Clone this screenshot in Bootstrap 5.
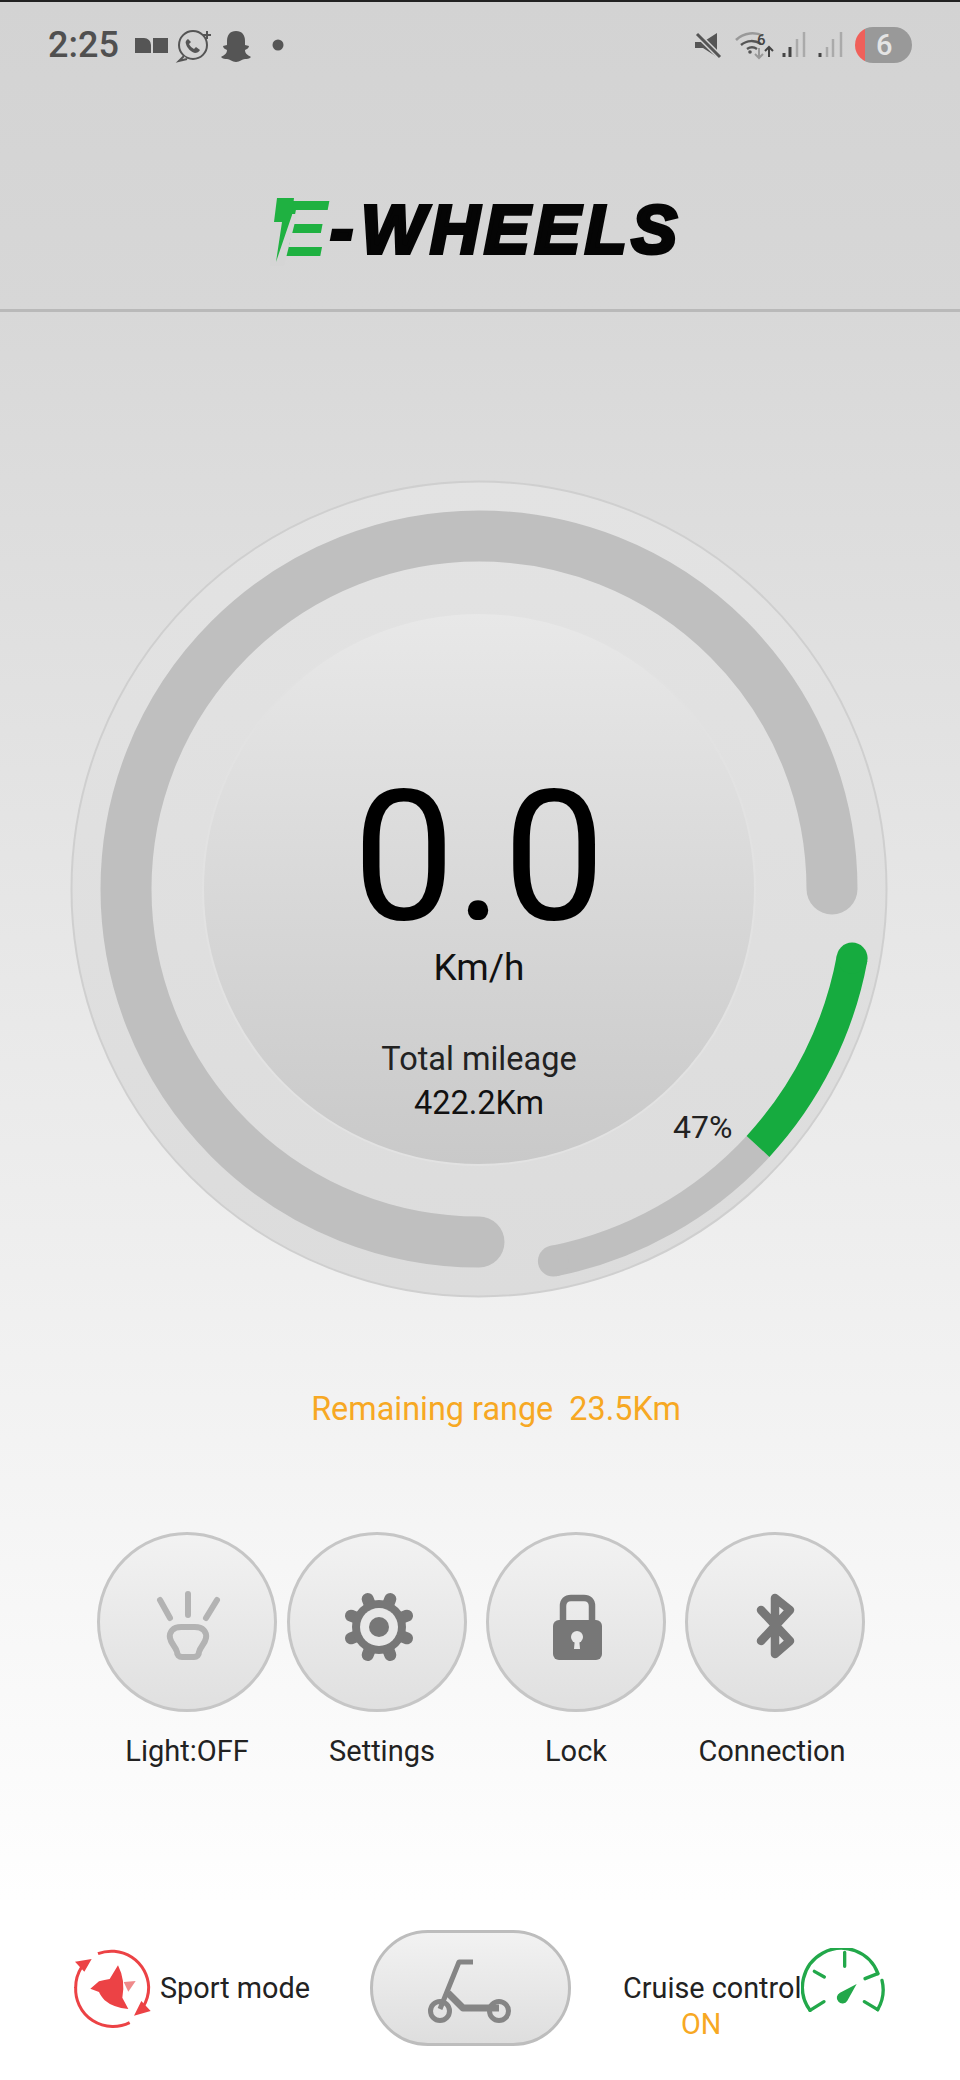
<!DOCTYPE html>
<html lang="en">
<head>
    <meta charset="UTF-8">
    <meta name="viewport" content="width=device-width, initial-scale=1.0">
    <title>E-Wheels</title>
    <link href="https://cdn.jsdelivr.net/npm/bootstrap@5.3.0/dist/css/bootstrap.min.css" rel="stylesheet">
    <style>
        body {
            margin: 0;
            background: #fff;
            font-family: Roboto, "Liberation Sans", sans-serif;
        }
        .app-shell {
            width: 960px;
            height: 2080px;
            overflow: hidden;
        }
        .top-head {
            height: 312px;
            background: linear-gradient(#d3d3d3, #d7d7d7);
            border-top: 2px solid #222;
            border-bottom: 3px solid #b9b9b9;
        }
        .status-row {
            height: 36px;
            margin-top: 25px;
            padding: 0 48px;
        }
        .status-time {
            font-size: 36px;
            font-weight: 500;
            color: #505050;
            line-height: 36px;
            width: 86px;
        }
        .logo-row {
            margin-top: 131px;
            margin-left: 274px;
            height: 70px;
        }
        .logo-e {
            font: italic 700 80px/70px "Liberation Sans", sans-serif;
            color: #1fb141;
        }
        .logo-bolt {
            position: absolute;
            left: 0;
            top: 0;
            overflow: visible;
        }
        .logo-dash {
            font: italic 700 68px/70px "Liberation Sans", sans-serif;
            color: #050505;
            -webkit-text-stroke: 4px #050505;
            margin: 0 8px 0 3px;
        }
        .logo-word {
            font: italic 700 68px/70px "Liberation Sans", sans-serif;
            color: #050505;
            -webkit-text-stroke: 4px #050505;
            letter-spacing: 5px;
        }
        .batt-pill {
            width: 57px;
            height: 36px;
            background: linear-gradient(90deg, #f0605a 10px, #999 10px);
            color: #e4e4e4;
            font-size: 29px;
            font-weight: 500;
            line-height: 36px;
            padding-left: 21px;
        }
        .dash-area {
            background: linear-gradient(#d8d8d8, #fefefe);
        }
        .dial {
            display: grid;
            width: 818px;
            height: 818px;
            margin: 168px 0 0 70px;
        }
        .dial > * {
            grid-area: 1 / 1;
        }
        .dial-text {
            padding-top: 297px;
            color: #111;
        }
        .speed-num {
            font-size: 182px;
            line-height: 160px;
            color: #000;
        }
        .speed-unit {
            font-size: 37px;
            line-height: 44px;
            margin-top: 9px;
        }
        .mile-head {
            font-size: 32.500px;
            line-height: 44px;
            margin-top: 47px;
            color: #222;
        }
        .mile-val {
            font-size: 32.500px;
            line-height: 44px;
        }
        .batt-pct {
            position: absolute;
            left: 603px;
            top: 629px;
            font-size: 32px;
            line-height: 36px;
            color: #222;
        }
        .range-line {
            margin-top: 90px;
            padding-left: 32px;
            font-size: 32.400px;
            line-height: 42px;
            color: #f7a823;
        }
        .ctrl-row {
            margin: 102px 0 0 97px;
            gap: 19px;
        }
        .ctrl-first {
            margin-right: -9px;
        }
        .ctrl-col {
            width: 180px;
        }
        .round-btn {
            width: 180px;
            height: 180px;
            padding: 0;
            background: linear-gradient(#f2f2f2, #e0e0e0);
            border: 3px solid #c6c6c6;
        }
        .round-btn svg {
            display: block;
        }
        .ctrl-label {
            margin-top: 21px;
            font-size: 29px;
            line-height: 36px;
            color: #222;
            white-space: nowrap;
        }
        .nudge-right {
            padding-left: 10px;
        }
        .nudge-left {
            padding-right: 6px;
        }
        .bottom-bar {
            height: 180px;
            background: #fff;
            flex-shrink: 0;
        }
        .sport-zone {
            width: 370px;
            padding: 47px 0 0 73px;
        }
        .zone-text {
            font-size: 28.800px;
            line-height: 36px;
            color: #222;
            white-space: nowrap;
        }
        .sport-text {
            padding: 23px 0 0 2px;
        }
        .scooter-btn {
            width: 201px;
            height: 116px;
            margin-top: 30px;
            padding: 0;
            background: linear-gradient(#f2f2f2, #dedede);
            border: 3px solid #bdbdbd;
            border-radius: 58px;
        }
        .cruise-zone {
            padding: 48px 0 0 52px;
        }
        .cruise-text {
            padding-top: 22px;
        }
        .cruise-on {
            color: #f7a823;
            padding-right: 22px;
        }
    </style>
</head>
<body>
    <div class="app-shell d-flex flex-column">
        <header class="top-head">
            <div class="status-row d-flex align-items-center justify-content-between">
                <div class="d-flex align-items-center">
                    <span class="status-time">2:25</span>
                    <svg width="170" height="36" viewBox="134 27 170 36">
                        <path d="M135 38h9a7 7 0 0 1 7 7v8h-16zM153 38h15v15h-15z" fill="#555"/>
                        <circle cx="193" cy="45" r="14" fill="none" stroke="#555" stroke-width="2"/>
                        <path d="M184 56l-5 5 8-2" fill="#d3d3d3" stroke="#555" stroke-width="2"/>
                        <path d="M188 39c-2 1-3 3-2 5 1 4 5 8 9 9 2 0 4-1 5-3l-4-3-2 2c-2-1-4-3-5-5l2-2z" fill="#555"/>
                        <path d="M203 35h8M207 31v8" stroke="#555" stroke-width="2"/>
                        <path d="M236 31c6 0 9 4 9 10v4l4 1c0 2-2 3-4 4 0 4 3 5 6 7-2 2-4 2-6 2-3 0-5 3-9 3s-6-3-9-3c-2 0-4 0-6-2 3-2 6-3 6-7-2-1-4-2-4-4l4-1v-4c0-6 3-10 9-10z" fill="#555"/>
                        <circle cx="278" cy="45" r="5.5" fill="#555"/>
                    </svg>
                </div>
                <div class="d-flex align-items-center">
                    <svg width="155" height="36" viewBox="692 27 155 36">
                        <path d="M695 42h8l14-9v24l-14-9h-8z" fill="#555"/>
                        <path d="M697 34l23 23" stroke="#d3d3d3" stroke-width="6"/>
                        <path d="M697 34l23 23" stroke="#555" stroke-width="3"/>
                        <path d="M736 40c8-8 20-8 27-4" fill="none" stroke="#999" stroke-width="2.5"/>
                        <path d="M741 45c6-5 14-5 20-1" fill="none" stroke="#555" stroke-width="2.5"/>
                        <path d="M747 49c3-2 7-2 10 0" fill="none" stroke="#555" stroke-width="2.5"/>
                        <circle cx="750" cy="52" r="1.8" fill="#555"/>
                        <text x="757" y="45" font-family="Roboto, sans-serif" font-size="15" font-weight="500" fill="#444">6</text>
                        <path d="M769 57V47M765 51l4-4 4 4" fill="none" stroke="#444" stroke-width="2"/>
                        <path d="M759 48v10M755 54l4 4 4-4" fill="none" stroke="#999" stroke-width="2"/>
                        <path d="M784 57v-4M790 57v-10" stroke="#444" stroke-width="3"/>
                        <path d="M797 57v-18M804 57v-25" stroke="#aaa" stroke-width="2.5"/>
                        <path d="M820 57v-4" stroke="#444" stroke-width="3"/>
                        <path d="M827 57v-10M833 57v-18M841 57v-25" stroke="#aaa" stroke-width="2.5"/>
                    </svg>
                    <span class="batt-pill rounded-pill ms-2">6</span>
                </div>
            </div>
            <div class="logo-row position-relative d-flex align-items-center">
                <span class="logo-e">E</span><span class="logo-dash">-</span><span class="logo-word">WHEELS</span>
                <svg class="logo-bolt" width="60" height="70" viewBox="0 0 60 70">
                    <path d="M-4 20H23L10 72H-4z" fill="#d5d5d5"/>
                    <path d="M3 4H20L18 21 2 68 8 28H0z" fill="#1fb141"/>
                </svg>
            </div>
        </header>

        <main class="dash-area flex-grow-1">
            <div class="dial position-relative">
                <svg width="818" height="818" viewBox="-1 -1 818 818">
                    <defs>
                        <linearGradient id="ringFill" x1="0" y1="0" x2="0" y2="1">
                            <stop offset="0" stop-color="#e3e3e3"/>
                            <stop offset="1" stop-color="#dcdcdc"/>
                        </linearGradient>
                        <linearGradient id="coreFill" x1="0" y1="0" x2="0" y2="1">
                            <stop offset="0" stop-color="#e8e8e8"/>
                            <stop offset="1" stop-color="#c9c9c9"/>
                        </linearGradient>
                    </defs>
                    <circle cx="408" cy="408" r="407.500" fill="url(#ringFill)" stroke="#cfcfcf" stroke-width="2"/>
                    <path d="M408 761A353 353 0 1 1 761 408" fill="none" stroke="#bfbfbf" stroke-width="51" stroke-linecap="round"/>
                    <circle cx="408" cy="408" r="276" fill="url(#coreFill)" stroke="#e2e2e2" stroke-width="2"/>
                    <path d="M482.4 780.1A379.5 379.5 0 0 0 687 665.4" fill="none" stroke="#bfbfbf" stroke-width="31"/>
                    <circle cx="482.4" cy="780.1" r="15.5" fill="#bfbfbf"/>
                    <path d="M687 665.4A379.5 379.5 0 0 0 781.1 477.1" fill="none" stroke="#16ab3f" stroke-width="31"/>
                    <circle cx="781.1" cy="477.1" r="15.5" fill="#16ab3f"/>
                </svg>
                <div class="dial-text d-flex flex-column align-items-center">
                    <div class="speed-num">0.0</div>
                    <div class="speed-unit">Km/h</div>
                    <div class="mile-head">Total mileage</div>
                    <div class="mile-val">422.2Km</div>
                </div>
                <span class="batt-pct">47%</span>
            </div>

            <div class="range-line text-center">Remaining range&nbsp;&nbsp;23.5Km</div>

            <div class="ctrl-row d-flex">
                <div class="ctrl-col ctrl-first text-center">
                    <button class="btn rounded-circle round-btn" type="button">
                        <svg width="174" height="174" viewBox="100 1535 174 174">
                            <path d="M188 1594v21M160 1600l10 18M217 1600l-11 18" stroke="#b3b3b3" stroke-width="6" stroke-linecap="round" fill="none"/>
                            <path d="M181 1627h14c8 0 12 5 11 11-1 6-6 9-7 14 0 3-2 5-5 5h-12c-3 0-5-2-5-5-1-5-6-8-7-14-1-6 3-11 11-11z" fill="none" stroke="#b3b3b3" stroke-width="6"/>
                        </svg>
                    </button>
                    <div class="ctrl-label">Light:OFF</div>
                </div>
                <div class="ctrl-col text-center">
                    <button class="btn rounded-circle round-btn" type="button">
                        <svg width="174" height="174" viewBox="290 1535 174 174">
                            <path d="M370 1605l-2.300-6M388 1605l2.300-6M370 1649l-2.300 6M388 1649l2.300 6M357 1618l-6-2.300M401 1618l6-2.300M357 1636l-6 2.300M401 1636l6 2.300" stroke="#777" stroke-width="12" stroke-linecap="round"/>
                            <circle cx="379" cy="1627" r="27" fill="#777"/>
                            <circle cx="379" cy="1627" r="19" fill="#e8e8e8"/>
                            <circle cx="379" cy="1627" r="10" fill="#777"/>
                        </svg>
                    </button>
                    <div class="ctrl-label nudge-right">Settings</div>
                </div>
                <div class="ctrl-col text-center">
                    <button class="btn rounded-circle round-btn" type="button">
                        <svg width="174" height="174" viewBox="489 1535 174 174">
                            <path d="M563 1622v-16c0-5 3-8 8-8h13c5 0 8 3 8 8v16" fill="none" stroke="#777" stroke-width="6.500"/>
                            <rect x="553" y="1620" width="49" height="40" rx="6" fill="#777"/>
                            <circle cx="577" cy="1637" r="6" fill="#e8e8e8"/>
                            <path d="M575 1638h4l1 11h-6z" fill="#e8e8e8"/>
                        </svg>
                    </button>
                    <div class="ctrl-label">Lock</div>
                </div>
                <div class="ctrl-col text-center">
                    <button class="btn rounded-circle round-btn" type="button">
                        <svg width="174" height="174" viewBox="688 1535 174 174">
                            <path d="M761 1610l29 31-15 13v-56l15 12-29 31" fill="none" stroke="#777" stroke-width="8.500" stroke-linecap="round" stroke-linejoin="round"/>
                        </svg>
                    </button>
                    <div class="ctrl-label nudge-left">Connection</div>
                </div>
            </div>
        </main>

        <footer class="bottom-bar d-flex">
            <div class="sport-zone d-flex">
                <svg width="85" height="84" viewBox="70 140 255 252">
                    <g fill="none" stroke="#ec4245" stroke-width="9">
                        <path d="M145 160a112 112 0 0 1 152 100 112 112 0 0 1-17 60"/>
                        <path d="M240 367a112 112 0 0 1-162-105 112 112 0 0 1 18-62"/>
                    </g>
                    <path d="M76 184l50-8-22 38zM303 332l-50 14 22-44z" fill="#ec4245"/>
                    <path d="M122 265L148 243Q165 238 180 236L205 195Q228 240 218 292L236 326Q190 322 165 300Q152 285 148 275Z" fill="#ec4245"/>
                    <path d="M222 245l36-3-22 32z" fill="#ef8a8b"/>
                </svg>
                <div class="zone-text sport-text">Sport mode</div>
            </div>
            <button class="btn scooter-btn flex-shrink-0" type="button">
                <svg width="90" height="75" viewBox="425 1945 90 75">
                    <g fill="none" stroke="#858585" stroke-width="5">
                        <circle cx="439" cy="2005" r="9.500"/>
                        <circle cx="498" cy="2005" r="9.500"/>
                        <path d="M472 1956h-14l-19 47" stroke-linejoin="round"/>
                        <path d="M447 1987l15 15h36" stroke-width="7" stroke-linejoin="round"/>
                    </g>
                </svg>
            </button>
            <div class="cruise-zone d-flex">
                <div class="zone-text cruise-text text-center">
                    <div>Cruise control</div>
                    <div class="cruise-on">ON</div>
                </div>
                <svg width="85" height="68" viewBox="905 145 255 204">
                    <g fill="none" stroke="#22a84a" stroke-width="10" stroke-linecap="round">
                        <path d="M932 332A117 117 0 1 1 1136 222"/>
                        <path d="M1148 242A118 118 0 0 1 1135 330"/>
                        <path d="M1036 158v42M945 215l30 17M1135 222l-38 15M932 332l42-26M1135 330l-40-24"/>
                    </g>
                    <path d="M1072 253l-28 50a17 17 0 1 1-22-24z" fill="#22a84a"/>
                </svg>
            </div>
        </footer>
    </div>
    <script src="https://cdn.jsdelivr.net/npm/bootstrap@5.3.0/dist/js/bootstrap.bundle.min.js"></script>
</body>
</html>
